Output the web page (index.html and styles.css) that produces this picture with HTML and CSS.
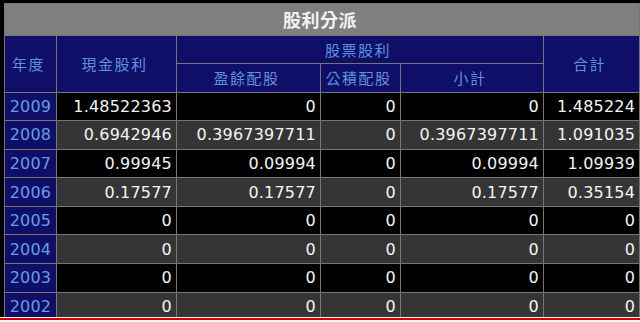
FILE: index.html
```html
<!DOCTYPE html>
<html lang="zh-Hant">
<head>
<meta charset="utf-8">
<title>股利分派</title>
<link rel="stylesheet" href="styles.css">
</head>
<body>
<div class="frame">
  <table class="div-table">
    <colgroup>
      <col class="c-year">
      <col class="c-cash">
      <col class="c-earn">
      <col class="c-cap">
      <col class="c-sub">
      <col class="c-total">
    </colgroup>
    <thead>
      <tr class="title-row"><th colspan="6" class="title">股利分派</th></tr>
      <tr class="head-row">
        <th rowspan="2" class="hd">年度</th>
        <th rowspan="2" class="hd">現金股利</th>
        <th colspan="3" class="hd">股票股利</th>
        <th rowspan="2" class="hd">合計</th>
      </tr>
      <tr class="head-row">
        <th class="hd">盈餘配股</th>
        <th class="hd">公積配股</th>
        <th class="hd">小計</th>
      </tr>
    </thead>
    <tbody>
      <tr class="row odd"><td class="yr">2009</td><td>1.48522363</td><td>0</td><td>0</td><td>0</td><td>1.485224</td></tr>
      <tr class="row even"><td class="yr">2008</td><td>0.6942946</td><td>0.3967397711</td><td>0</td><td>0.3967397711</td><td>1.091035</td></tr>
      <tr class="row odd"><td class="yr">2007</td><td>0.99945</td><td>0.09994</td><td>0</td><td>0.09994</td><td>1.09939</td></tr>
      <tr class="row even"><td class="yr">2006</td><td>0.17577</td><td>0.17577</td><td>0</td><td>0.17577</td><td>0.35154</td></tr>
      <tr class="row odd"><td class="yr">2005</td><td>0</td><td>0</td><td>0</td><td>0</td><td>0</td></tr>
      <tr class="row even"><td class="yr">2004</td><td>0</td><td>0</td><td>0</td><td>0</td><td>0</td></tr>
      <tr class="row odd"><td class="yr">2003</td><td>0</td><td>0</td><td>0</td><td>0</td><td>0</td></tr>
      <tr class="row even"><td class="yr">2002</td><td>0</td><td>0</td><td>0</td><td>0</td><td>0</td></tr>
    </tbody>
  </table>
</div>
<div class="footer"></div>
</body>
</html>
```
FILE: styles.css
```css
html, body {
  margin: 0;
  padding: 0;
}
body {
  background: #f7f7f2;
  font-family: "DejaVu Sans", "Noto Sans CJK TC", sans-serif;
}
.frame {
  box-sizing: border-box;
  height: 317px;
  overflow: hidden;
  background: #000;
  padding: 3px 1px 0 4px;
}
.div-table {
  border-collapse: collapse;
  table-layout: fixed;
  width: 635px;
}
.c-year { width: 52px; }
.c-cash { width: 120px; }
.c-earn { width: 144px; }
.c-cap { width: 80px; }
.c-sub { width: 143px; }
.c-total { width: 96px; }

.div-table th,
.div-table td {
  border: 1px solid #767676;
  padding: 0 4px 0 0;
  white-space: nowrap;
  overflow: hidden;
}
.title-row { height: 31.5px; }
.title {
  background: #7f7f7f;
  color: #f2f2f2;
  font-family: "Noto Sans CJK TC", sans-serif;
  font-size: 18px;
  font-weight: bold;
  text-align: center;
  padding: 0;
  letter-spacing: 0.5px;
  border-top-color: #7f7f7f;
  border-bottom-color: #5a5a5a;
}
.head-row { height: 28.5px; }
.hd {
  background: #0f0f68;
  color: #5f8fdf;
  font-family: "Noto Sans CJK TC", sans-serif;
  font-size: 15px;
  font-weight: normal;
  letter-spacing: 1.5px;
  text-align: center;
  padding: 0;
}
.row { height: 28.6px; }
.row td {
  color: #f4f4f4;
  font-size: 16px;
  text-align: right;
  letter-spacing: 0.2px;
}
.row.odd td { background: #000; }
.row.even td { background: #353535; }
.row td.yr {
  background: #0f0f68;
  color: #6a9be6;
  text-align: center;
  padding: 0;
}
.footer {
  margin-top: 1px;
  border-top: 2px solid #d40000;
  height: 3px;
}
```
